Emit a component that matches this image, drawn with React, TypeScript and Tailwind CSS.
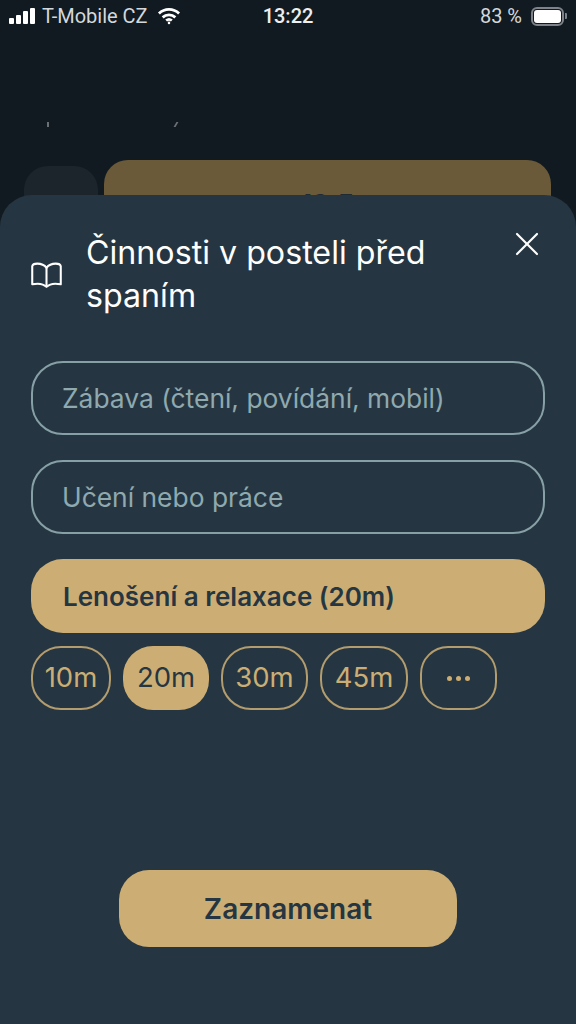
import { X } from "lucide-react";

const durations = [
  { label: "10m", w: "w-[80px]" },
  { label: "20m", w: "w-[86px]", active: true },
  { label: "30m", w: "w-[87px]" },
  { label: "45m", w: "w-[88px]" },
];

function StatusBar() {
  return (
    <div className="flex h-[32px] items-center justify-between pl-[9px] pr-[9px] text-[20px] font-['Roboto',sans-serif]">
      <div className="flex w-[200px] items-center">
        <div className="flex items-end gap-[2px]">
          <span className="h-[6px] w-[5px] rounded-[1px] bg-white" />
          <span className="h-[9px] w-[5px] rounded-[1px] bg-white" />
          <span className="h-[13px] w-[5px] rounded-[1px] bg-white" />
          <span className="h-[16px] w-[5px] rounded-[1px] bg-white" />
        </div>
        <span className="ml-[7px] text-[#d5d8da]">T-Mobile CZ</span>
        <svg className="ml-[9px]" width="24" height="18" viewBox="0 0 22 17" fill="none" stroke="white" strokeWidth="2.6">
          <path d="M1.5 6.2C6.8 1 15.2 1 20.5 6.2" />
          <path d="M5 9.8c3.4-3.2 8.6-3.2 12 0" />
          <path d="M8.3 12.8c1.6-1.3 3.8-1.3 5.4 0" />
          <circle cx="11" cy="15" r="1.2" fill="white" stroke="none" />
        </svg>
      </div>
      <span className="font-medium text-[#eceeef]">13:22</span>
      <div className="flex w-[200px] items-center justify-end text-[#d5d8da]">
        <span>83 %</span>
        <div className="ml-[9px] flex h-[19px] w-[33px] items-center rounded-[6px] border-2 border-[#7d8388] p-[1px]">
          <span className="h-full w-full rounded-[3px] bg-white" />
        </div>
        <span className="ml-[1px] h-[6px] w-[2px] rounded-r-[1px] bg-[#7d8388]" />
      </div>
    </div>
  );
}

export default function App() {
  return (
    <div className="flex h-[1024px] w-[576px] flex-col overflow-hidden bg-[#121a21] font-['Inter',sans-serif]">
      <StatusBar />
      <div className="flex h-[128px] items-end pb-[33px] pl-[47px]">
        <span className="h-[5px] w-[2px] bg-[#6b7075]" />
        <span className="ml-[126px] h-[5px] w-[2px] -skew-x-[30deg] bg-[#6b7075]" />
      </div>
      <div className="flex h-[35px] items-start gap-[6px] pl-[24px] pr-[25px]">
        <div className="mt-[6px] h-[70px] w-[74px] shrink-0 rounded-[24px] bg-[#1c252c]" />
        <div className="flex h-[80px] flex-1 justify-center rounded-[24px] bg-[#6a5a3a] pt-[24px] text-[26px] font-bold text-[#1f2a33]">
          19:5
        </div>
      </div>
      <div className="relative z-10 flex flex-1 flex-col rounded-t-[32px] bg-[#253642] px-[31px]">
        <div className="flex h-[166px] items-start">
          <svg className="mt-[67px] shrink-0" width="31" height="26" viewBox="0 0 30 25" fill="none" stroke="white" strokeWidth="2" strokeLinejoin="round">
            <path d="M15 5.5C13 2.8 10 1.5 6 1.5 3.5 1.5 1.5 2.5 1.2 4v17.5C6 20.5 12 21 15 24c3-3 9-3.5 13.8-2.5V4C28.5 2.5 26.5 1.5 24 1.5 20 1.5 17 2.8 15 5.5Z" />
            <path d="M15 5.5V24" />
          </svg>
          <h1 className="ml-[24px] mt-[36px] w-[370px] text-[32.2px] leading-[43px] font-normal text-white">
            Činnosti v posteli před spaním
          </h1>
          <X className="ml-auto mt-[29px] mr-[-2px] shrink-0 text-white" size={40} strokeWidth={1.3} />
        </div>
        <div className="flex flex-col gap-[25px]">
          <div className="flex h-[74px] items-center rounded-[32px] border-2 border-[#a8c4c8]/75 px-[29px] pt-[1px] text-[26.4px] text-[#8fa9ae]">
            Zábava (čtení, povídání, mobil)
          </div>
          <div className="flex h-[74px] items-center rounded-[32px] border-2 border-[#a8c4c8]/75 px-[29px] pt-[1px] text-[26.4px] text-[#8fa9ae]">
            Učení nebo práce
          </div>
          <div className="flex h-[74px] items-center rounded-[32px] bg-[#ccae74] px-[32px] text-[26px] font-semibold text-[#253642]">
            Lenošení a relaxace (20m)
          </div>
        </div>
        <div className="mt-[13px] flex gap-[12px]">
          {durations.map((d) => (
            <div
              key={d.label}
              className={`flex h-[64px] items-center justify-center rounded-[30px] text-[27.5px] ${d.w} ${
                d.active ? "bg-[#ccae74] text-[#253642]" : "border-2 border-[#ccae74]/85 text-[#ccae74]"
              }`}
            >
              {d.label}
            </div>
          ))}
          <div className="flex h-[64px] w-[77px] items-center justify-center gap-[4px] rounded-[28px] border-2 border-[#ccae74]/85">
            <span className="size-[5px] rounded-full bg-[#ccae74]" />
            <span className="size-[5px] rounded-full bg-[#ccae74]" />
            <span className="size-[5px] rounded-full bg-[#ccae74]" />
          </div>
        </div>
        <div className="mt-[160px] flex justify-center">
          <div className="flex h-[77px] w-[338px] items-center justify-center rounded-[30px] bg-[#ccae74] text-[28px] font-semibold text-[#253642]">
            Zaznamenat
          </div>
        </div>
      </div>
    </div>
  );
}
